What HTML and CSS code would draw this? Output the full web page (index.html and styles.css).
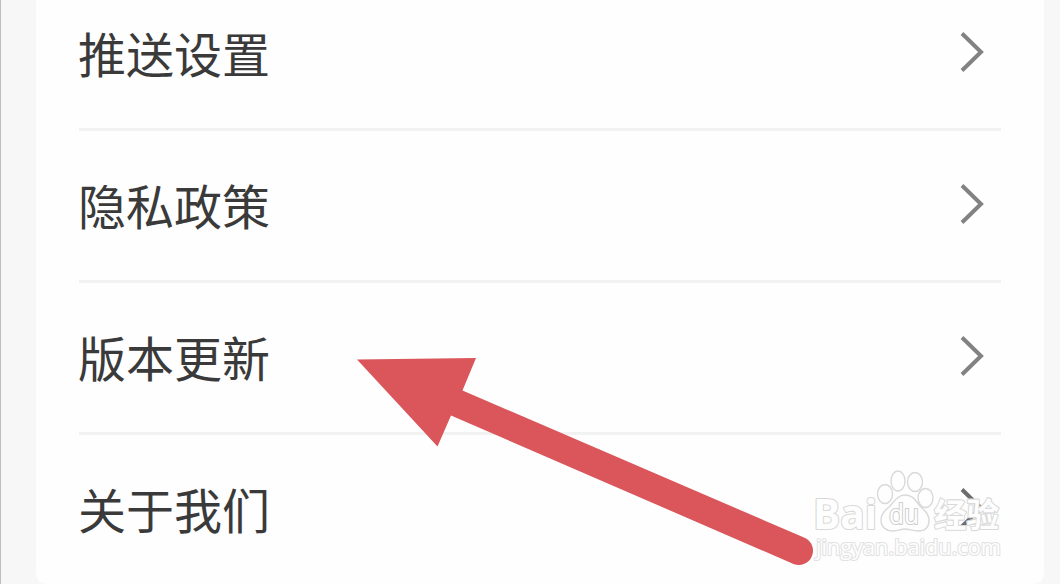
FILE: index.html
```html
<!DOCTYPE html>
<html lang="zh-CN">
<head>
	<meta charset="UTF-8">
	<title>设置</title>
	<link rel="stylesheet" href="styles.css">
</head>
<body>
	<main class="card">
		<ul class="menu">
			<li class="item">
				<span class="label">推送设置</span>
				<svg class="chevron" width="24" height="42" viewBox="0 0 24 42"><path d="M2 2.500L21 21L2 39.500"/></svg>
			</li>
			<li class="item">
				<span class="label">隐私政策</span>
				<svg class="chevron" width="24" height="42" viewBox="0 0 24 42"><path d="M2 2.500L21 21L2 39.500"/></svg>
			</li>
			<li class="item">
				<span class="label">版本更新</span>
				<svg class="chevron" width="24" height="42" viewBox="0 0 24 42"><path d="M2 2.500L21 21L2 39.500"/></svg>
			</li>
			<li class="item">
				<span class="label">关于我们</span>
				<svg class="chevron" width="24" height="42" viewBox="0 0 24 42"><path d="M2 2.500L21 21L2 39.500"/></svg>
			</li>
		</ul>
	</main>

	<svg class="arrow" width="460" height="212" viewBox="0 0 460 212">
		<path d="M1 3.500L120 2L106.500 34.500L448 181.500A14 14 0 0 1 437.500 208L95 59.500L81.500 90.500Z"/>
	</svg>

	<svg class="watermark" width="210" height="110" viewBox="800 460 210 110">
		<g class="outline">
			<text class="brand" x="813" y="528.500" textLength="64" lengthAdjust="spacingAndGlyphs">Bai</text>
			<text class="cn" x="934" y="526.500" textLength="65" lengthAdjust="spacingAndGlyphs">经验</text>
			<text class="url" x="816" y="555" textLength="185" lengthAdjust="spacingAndGlyphs">jingyan.baidu.com</text>
		</g>
		<g class="paw">
			<ellipse cx="885" cy="494" rx="7.500" ry="9.500"/>
			<ellipse cx="898" cy="481" rx="7" ry="10"/>
			<ellipse cx="915" cy="482" rx="7.500" ry="9.500"/>
			<ellipse cx="925.500" cy="498" rx="7.500" ry="9.500"/>
			<path d="M905 495C897 495 894 502 889 507C884 511 881 515 881 520C881 527 886 531 893 531C898 531 901 529 905 529C909 529 913 531 918 531C925 531 929 527 929 520C929 514 925 511 921 507C916 502 914 495 905 495Z"/>
		</g>
		<text class="du" x="889" y="524" textLength="30" lengthAdjust="spacingAndGlyphs">du</text>
	</svg>
</body>
</html>
```

FILE: styles.css
```css
body {
	margin: 0;
	height: 584px;
	box-sizing: border-box;
	padding: 0 16px 0 35px;
	border-left: 1px solid #bdbdbd;
	background-color: #f7f7f7;
	font-family: "Noto Sans CJK SC", sans-serif;
	position: relative;
	overflow: hidden;
}

.card {
	height: 584px;
	box-sizing: border-box;
	padding: 0 43px;
	background-color: #fefefe;
	border-radius: 0 0 10px 10px;
	overflow: hidden;
}

/* the list is scrolled a little past its top */
.menu {
	list-style: none;
	margin: -21px 0 0;
	padding: 0;
}

.item {
	display: flex;
	justify-content: space-between;
	align-items: center;
	height: 152px;
	box-sizing: border-box;
	padding-right: 17px;
	border-bottom: 3px solid #f2f2f2;
}

.item:last-child {
	border-bottom-color: transparent;
}

.label {
	font-size: 48px;
	line-height: 70px;
	color: #3a3a3a;
	margin: 0 0 3px -1px;
}

.chevron {
	margin-bottom: 3px;
	fill: none;
	stroke: #828282;
	stroke-width: 4;
}

.item:last-child .chevron {
	stroke: #6c6c6c;
}

.arrow {
	position: absolute;
	left: 355px;
	top: 356px;
	fill: #da565b;
}

/* Watermark */
.watermark {
	position: absolute;
	left: 799px;
	top: 460px;
}

.outline text {
	fill: #fefefe;
	stroke: #d9d9d9;
	stroke-width: 2.2;
	stroke-linejoin: round;
	paint-order: stroke;
}

.outline .brand {
	font-family: "Open Sans", sans-serif;
	font-weight: 700;
	font-size: 41px;
}

.outline .cn {
	font-weight: 700;
	font-size: 33px;
}

.outline .url {
	font-family: "Open Sans", sans-serif;
	font-size: 22px;
	stroke: #e2e2e2;
}

.paw {
	fill: #fefefe;
	stroke: #d9d9d9;
	stroke-width: 1.4;
}

.du {
	font-family: "Open Sans", sans-serif;
	font-size: 27px;
	fill: #fefefe;
	stroke: #cfcfcf;
	stroke-width: 2.2;
	paint-order: stroke;
}
```
